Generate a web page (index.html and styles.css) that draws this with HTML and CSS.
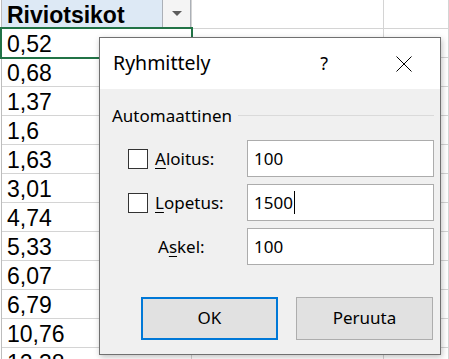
FILE: index.html
```html
<!DOCTYPE html>
<html lang="fi">
<head>
  <meta charset="UTF-8" />
  <title>Ryhmittely</title>
  <link rel="stylesheet" href="styles.css">
</head>
<body>
  <div class="sheet">
    <div class="row head">
      <div class="cell col-a">Riviotsikot<span class="filter"><span class="arrow"></span></span></div>
      <div class="cell col-b"></div>
      <div class="cell col-c"></div>
    </div>
    <div class="row"><div class="cell col-a selected">0,52</div><div class="cell col-b"></div><div class="cell col-c"></div></div>
    <div class="row"><div class="cell col-a">0,68</div><div class="cell col-b"></div><div class="cell col-c"></div></div>
    <div class="row"><div class="cell col-a">1,37</div><div class="cell col-b"></div><div class="cell col-c"></div></div>
    <div class="row"><div class="cell col-a">1,6</div><div class="cell col-b"></div><div class="cell col-c"></div></div>
    <div class="row"><div class="cell col-a">1,63</div><div class="cell col-b"></div><div class="cell col-c"></div></div>
    <div class="row"><div class="cell col-a">3,01</div><div class="cell col-b"></div><div class="cell col-c"></div></div>
    <div class="row"><div class="cell col-a">4,74</div><div class="cell col-b"></div><div class="cell col-c"></div></div>
    <div class="row"><div class="cell col-a">5,33</div><div class="cell col-b"></div><div class="cell col-c"></div></div>
    <div class="row"><div class="cell col-a">6,07</div><div class="cell col-b"></div><div class="cell col-c"></div></div>
    <div class="row"><div class="cell col-a">6,79</div><div class="cell col-b"></div><div class="cell col-c"></div></div>
    <div class="row"><div class="cell col-a">10,76</div><div class="cell col-b"></div><div class="cell col-c"></div></div>
    <div class="row"><div class="cell col-a">12,38</div><div class="cell col-b"></div><div class="cell col-c"></div></div>
  </div>

  <div class="dialog">
    <div class="dlg-title">
      <span class="dlg-name">Ryhmittely</span>
      <span class="help">?</span>
      <svg class="close" width="16" height="16" viewBox="0 0 16 16">
        <path d="M0.5 0.5 L15.5 15.5 M15.5 0.5 L0.5 15.5" stroke="#000" stroke-width="1" fill="none"/>
      </svg>
    </div>
    <div class="dlg-body">
      <div class="group-label"><span>Automaattinen</span><span class="rule"></span></div>

      <div class="fields">
        <div class="field">
          <span class="check"></span>
          <span class="label"><u>A</u>loitus:</span>
          <span class="input">100</span>
        </div>
        <div class="field">
          <span class="check"></span>
          <span class="label"><u>L</u>opetus:</span>
          <span class="input">1500<span class="caret"></span></span>
        </div>
        <div class="field">
          <span class="no-check"></span>
          <span class="label indent">A<u>s</u>kel:</span>
          <span class="input">100</span>
        </div>
      </div>

      <div class="buttons">
        <button class="btn btn-default">OK</button>
        <button class="btn">Peruuta</button>
      </div>
    </div>
  </div>
</body>
</html>
```

FILE: styles.css
```css
body {
  margin: 0;
  width: 449px;
  height: 359px;
  overflow: hidden;
  background: #fff;
  position: relative;
}

/* Taulukko */
.sheet {
  font-family: 'Liberation Sans', Arial, sans-serif;
  font-size: 23px;
  color: #000;
  border-left: 1px solid #bdbdbd;
  margin-left: 1px;
}

.row {
  display: flex;
  height: 29px;
}

.cell {
  box-sizing: border-box;
  height: 29px;
  border-right: 1px solid #d4d4d4;
  border-bottom: 1px solid #d4d4d4;
  line-height: 26px;
  padding: 2px 0 0 5px;
  white-space: nowrap;
}

.col-a {
  width: 190px;
  position: relative;
}

.col-b {
  width: 192px;
}

.col-c {
  flex: 1;
}

.head .col-a {
  background: #dde9f5;
  font-weight: bold;
  border-bottom-color: #c6c6c6;
}

.filter {
  position: absolute;
  top: 0;
  right: 0;
  width: 27px;
  height: 27px;
  background: #f4f4f4;
  border-left: 1px solid #abb0b7;
  border-right: 1px solid #abb0b7;
  display: flex;
  justify-content: center;
  align-items: center;
}

.arrow {
  width: 0;
  height: 0;
  border-left: 5px solid transparent;
  border-right: 5px solid transparent;
  border-top: 5px solid #5c5c5c;
}

.selected::after {
  content: '';
  position: absolute;
  top: -2px;
  left: -2px;
  right: -2px;
  bottom: -2px;
  border: 2px solid #217346;
}

/* Ryhmittely-ikkuna */
.dialog {
  position: absolute;
  left: 99px;
  top: 37px;
  width: 342px;
  height: 318px;
  box-sizing: border-box;
  border: 1px solid #707070;
  box-shadow: 1px 2px 6px rgba(0, 0, 0, 0.25);
  font-family: 'Noto Sans', 'Open Sans', sans-serif;
  font-size: 17px;
  color: #000;
  display: flex;
  flex-direction: column;
}

.dlg-title {
  background: #fff;
  height: 51px;
  display: flex;
  align-items: center;
  padding-left: 13px;
}

.dlg-name {
  flex: 1;
  font-size: 19.5px;
  padding-bottom: 2px;
}

.help {
  font-size: 18px;
  margin-right: 68px;
  padding-bottom: 2px;
}

.close {
  margin-right: 28px;
  margin-top: 1px;
}

.dlg-body {
  flex: 1;
  background: #f0f0f0;
  padding: 0 6px 0 12px;
}

.group-label {
  display: flex;
  align-items: center;
  gap: 6px;
  height: 24px;
  margin-top: 14px;
}

.rule {
  flex: 1;
  height: 1px;
  background: #dadada;
}

.fields {
  display: flex;
  flex-direction: column;
  gap: 7px;
  margin-top: 13px;
  padding-left: 16px;
}

.field {
  display: flex;
  align-items: center;
  height: 37px;
}

.check {
  width: 18px;
  height: 18px;
  border: 1px solid #333;
  background: #fff;
  margin-right: 7px;
}

.no-check {
  width: 27px;
}

.label {
  width: 92px;
  padding-bottom: 1px;
}

.label u {
  text-underline-offset: 3px;
}

.indent {
  padding-left: 3px;
  width: 89px;
}

.input {
  flex: 1;
  height: 37px;
  box-sizing: border-box;
  background: #fff;
  border: 1px solid #acacac;
  padding: 0 0 1px 6px;
  display: flex;
  align-items: center;
}

.caret {
  width: 1px;
  height: 23px;
  background: #000;
  margin-left: 1px;
}

.buttons {
  display: flex;
  justify-content: flex-end;
  gap: 18px;
  margin-top: 32px;
  padding-right: 1px;
}

.btn {
  width: 137px;
  height: 43px;
  box-sizing: border-box;
  background: #e1e1e1;
  border: 1px solid #adadad;
  font-family: 'Noto Sans', 'Open Sans', sans-serif;
  font-size: 17px;
  color: #000;
  padding: 0 0 2px;
}

.btn-default {
  border: 2px solid #0078d7;
}
```
